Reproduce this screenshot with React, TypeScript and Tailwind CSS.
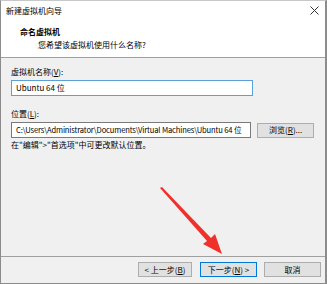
import React from "react";

const font = { fontFamily: '"Noto Sans CJK SC", "Noto Sans", sans-serif' };

const Btn = ({ children, primary, w }: { children: React.ReactNode; primary?: boolean; w: string }) => (
  <div
    className={`${w} h-[15px] flex items-center justify-center text-[8px] leading-none bg-[#e1e1e1] border ${
      primary ? "border-[#0078d7]" : "border-[#adadad]"
    } text-black`}
  >
    {children}
  </div>
);

const App = () => {
  return (
    <div
      className="relative w-[327px] h-[284px] flex flex-col bg-[#f0f0f0] border-l border-r-2 border-b border-t border-[#8c8c8c] border-t-[#c8c8c8] overflow-hidden text-black"
      style={font}
    >
      {/* title bar */}
      <div className="h-[19px] bg-white flex items-center justify-between pl-[5px] pr-[6px]">
        <span className="text-[8px] leading-none">新建虚拟机向导</span>
        <svg width="9" height="9" viewBox="0 0 9 9">
          <path d="M0.5 0.5 L8.5 8.5 M8.5 0.5 L0.5 8.5" stroke="#333" strokeWidth="1" />
        </svg>
      </div>
      {/* header */}
      <div className="h-[38px] bg-white border-b border-[#a0a0a0] pl-[19px] pt-[7px] flex flex-col">
        <span className="text-[8px] leading-[10px] font-bold">命名虚拟机</span>
        <span className="text-[8px] leading-[10px] pl-[18px] mt-[3px]">您希望该虚拟机使用什么名称?</span>
      </div>
      {/* body */}
      <div className="flex-1 flex flex-col pl-[10px] pr-[11px] pt-[9px]">
        <span className="text-[8px] leading-[10px]">
          虚拟机名称(<span className="underline">V</span>):
        </span>
        <div className="mt-[3px] w-[242px] h-[16px] bg-white border border-[#5a9fd8] flex items-center px-[4px] text-[8px] leading-none">
          Ubuntu 64 位
        </div>
        <span className="mt-[13px] text-[8px] leading-[10px]">
          位置(<span className="underline">L</span>):
        </span>
        <div className="mt-[3px] flex items-center gap-[6px]">
          <div className="w-[242px] h-[16px] bg-white border border-[#7a7a7a] flex items-center pl-[4px] text-[7.6px] tracking-[-0.15px] leading-none whitespace-nowrap overflow-hidden">
            C:\Users\Administrator\Documents\Virtual Machines\Ubuntu 64 位
          </div>
          <div className="w-[57px] h-[15px] bg-[#e1e1e1] border border-[#adadad] flex items-center justify-center text-[8px] leading-none">
            浏览(<span className="underline">R</span>)...
          </div>
        </div>
        <span className="mt-[2px] text-[8px] leading-[10px]">在"编辑"&gt;"首选项"中可更改默认位置。</span>
      </div>
      {/* footer */}
      <div className="h-[27px] border-t border-[#a0a0a0] flex items-center justify-end pr-[4px] pb-[1px]">
        <Btn w="w-[54px]">
          &lt; 上一步(<span className="underline">B</span>)
        </Btn>
        <div className="w-[8px]" />
        <Btn w="w-[57px]" primary>
          下一步(<span className="underline">N</span>) &gt;
        </Btn>
        <div className="w-[7px]" />
        <Btn w="w-[57px]">取消</Btn>
      </div>
      {/* red arrow annotation */}
      <svg className="absolute left-0 top-0 pointer-events-none" width="327" height="284" viewBox="0 0 327 284">
        <polygon points="159,187 161,186 210,237 214,233 221,253 202,243 206,240" fill="#f0302a" />
      </svg>
    </div>
  );
};

export default App;
